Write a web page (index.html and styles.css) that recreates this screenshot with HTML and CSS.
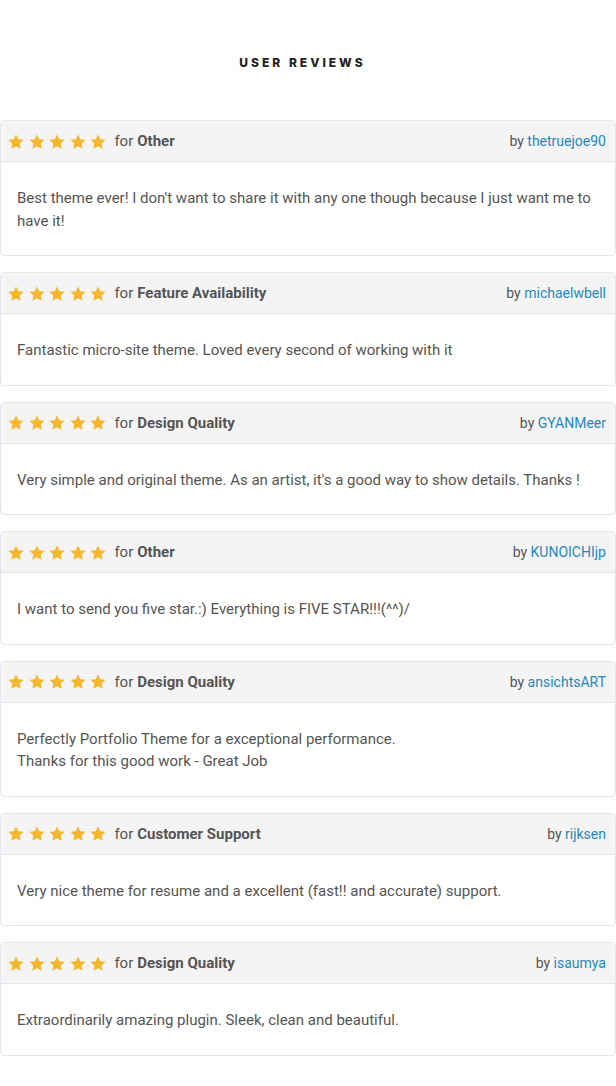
FILE: index.html
```html
<!DOCTYPE html>
<html lang="en">
<head>
  <meta charset="UTF-8">
  <title>User Reviews</title>

  <link rel="stylesheet" href="styles.css">
</head>

<body>

<h2 class="section-title">USER REVIEWS</h2>

<!-- star icon reused in every rating -->
<svg width="0" height="0" style="position:absolute">
  <symbol id="star" viewBox="0 0 24 23">
    <path d="M12 0.6l3.5 7.3 8 1.1-5.8 5.6 1.4 7.9L12 18.7l-7.1 3.8 1.4-7.9L0.5 9l8-1.1z"/>
  </symbol>
</svg>

<div class="reviews">

  <div class="review">
    <div class="review-head">
      <div class="rating">
        <span class="stars"><svg><use href="#star"/></svg><svg><use href="#star"/></svg><svg><use href="#star"/></svg><svg><use href="#star"/></svg><svg><use href="#star"/></svg></span>
        for <strong>Other</strong>
      </div>
      <div class="author">by <a href="#">thetruejoe90</a></div>
    </div>
    <div class="review-body">Best theme ever! I don't want to share it with any one though because I just want me to have it!</div>
  </div>

  <div class="review">
    <div class="review-head">
      <div class="rating">
        <span class="stars"><svg><use href="#star"/></svg><svg><use href="#star"/></svg><svg><use href="#star"/></svg><svg><use href="#star"/></svg><svg><use href="#star"/></svg></span>
        for <strong>Feature Availability</strong>
      </div>
      <div class="author">by <a href="#">michaelwbell</a></div>
    </div>
    <div class="review-body">Fantastic micro-site theme. Loved every second of working with it</div>
  </div>

  <div class="review">
    <div class="review-head">
      <div class="rating">
        <span class="stars"><svg><use href="#star"/></svg><svg><use href="#star"/></svg><svg><use href="#star"/></svg><svg><use href="#star"/></svg><svg><use href="#star"/></svg></span>
        for <strong>Design Quality</strong>
      </div>
      <div class="author">by <a href="#">GYANMeer</a></div>
    </div>
    <div class="review-body">Very simple and original theme. As an artist, it's a good way to show details. Thanks !</div>
  </div>

  <div class="review">
    <div class="review-head">
      <div class="rating">
        <span class="stars"><svg><use href="#star"/></svg><svg><use href="#star"/></svg><svg><use href="#star"/></svg><svg><use href="#star"/></svg><svg><use href="#star"/></svg></span>
        for <strong>Other</strong>
      </div>
      <div class="author">by <a href="#">KUNOICHIjp</a></div>
    </div>
    <div class="review-body">I want to send you five star.:) Everything is FIVE STAR!!!(^^)/</div>
  </div>

  <div class="review">
    <div class="review-head">
      <div class="rating">
        <span class="stars"><svg><use href="#star"/></svg><svg><use href="#star"/></svg><svg><use href="#star"/></svg><svg><use href="#star"/></svg><svg><use href="#star"/></svg></span>
        for <strong>Design Quality</strong>
      </div>
      <div class="author">by <a href="#">ansichtsART</a></div>
    </div>
    <div class="review-body">Perfectly Portfolio Theme for a exceptional performance.<br>Thanks for this good work - Great Job</div>
  </div>

  <div class="review">
    <div class="review-head">
      <div class="rating">
        <span class="stars"><svg><use href="#star"/></svg><svg><use href="#star"/></svg><svg><use href="#star"/></svg><svg><use href="#star"/></svg><svg><use href="#star"/></svg></span>
        for <strong>Customer Support</strong>
      </div>
      <div class="author">by <a href="#">rijksen</a></div>
    </div>
    <div class="review-body">Very nice theme for resume and a excellent (fast!! and accurate) support.</div>
  </div>

  <div class="review">
    <div class="review-head">
      <div class="rating">
        <span class="stars"><svg><use href="#star"/></svg><svg><use href="#star"/></svg><svg><use href="#star"/></svg><svg><use href="#star"/></svg><svg><use href="#star"/></svg></span>
        for <strong>Design Quality</strong>
      </div>
      <div class="author">by <a href="#">isaumya</a></div>
    </div>
    <div class="review-body">Extraordinarily amazing plugin. Sleek, clean and beautiful.</div>
  </div>

</div>

</body>
</html>
```

FILE: styles.css
```css
body {
  margin: 0;
  font-family: Roboto, 'Liberation Sans', sans-serif;
  background: #fff;
  color: #555;
}
.section-title {
  margin: 0;
  padding: 55px 11px 0 0;
  height: 65px;
  text-align: center;
  font-family: Inter, 'Open Sans', sans-serif;
  font-size: 12px;
  font-weight: 800;
  letter-spacing: 3px;
  color: #222;
  line-height: 16px;
}
.review {
  border: 1px solid #e1e6ec;
  border-radius: 4px;
  margin-bottom: 16px;
  overflow: hidden;
}
.review-head {
  display: flex;
  justify-content: space-between;
  align-items: center;
  height: 40px;
  padding: 0 9px 0 7px;
  background: #f4f4f4;
  border-bottom: 1px solid #e1e6ec;
  font-size: 15px;
}
.rating {
  display: flex;
  align-items: center;
  gap: 4px;
}
.rating strong {
  font-weight: 700;
}
.stars {
  display: flex;
  gap: 4.6px;
  margin-right: 4px;
}
.stars svg {
  width: 16px;
  height: 15px;
  fill: #f5b72e;
}
.author {
  font-size: 14px;
}
.author a {
  color: #1f88bf;
  text-decoration: none;
}
.review-body {
  padding: 25px 16px 23px;
  font-size: 15px;
  line-height: 1.5;
}
```
